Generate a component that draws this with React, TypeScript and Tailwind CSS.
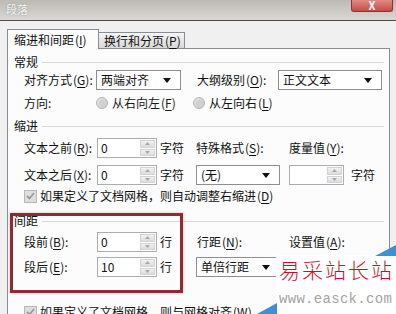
import type { JSX, ReactNode } from "react";

function Acc({ text, k, colon = true }: { text: string; k: string; colon?: boolean }): JSX.Element {
  return (
    <span className="whitespace-nowrap">
      {text}
      <span className="ml-[1px]">(</span>
      <span className="underline underline-offset-2">{k}</span>)
      {colon ? ":" : ""}
    </span>
  );
}

function Heading({ title }: { title: string }): JSX.Element {
  return (
    <div className="flex items-center h-[16px] pl-[6px] pr-[5px]">
      <span>{title}</span>
      <div className="ml-[4px] flex-1 h-px bg-[#d8d8d8]" />
    </div>
  );
}

function Arrow(): JSX.Element {
  return (
    <svg width="8" height="5" viewBox="0 0 8 5" className="shrink-0">
      <path d="M0 0h8L4 5z" fill="#111" />
    </svg>
  );
}

function Select({ value, className }: { value: string; className: string }): JSX.Element {
  return (
    <div className={`flex items-center h-[20px] border border-[#8e8f8f] bg-white pl-[4px] pr-[9px] ${className}`}>
      <span className="flex-1">{value}</span>
      <Arrow />
    </div>
  );
}

function Spin({ value, className }: { value: string; className: string }): JSX.Element {
  return (
    <div className={`flex h-[20px] border border-[#abadb3] bg-white ${className}`}>
      <div className="flex-1 pl-[3px] leading-[18px]">{value}</div>
      <div className="w-[17px] flex flex-col gap-px p-px bg-white">
        <div className="flex-1 flex items-center justify-center bg-gradient-to-b from-[#f2f2f2] to-[#dcdcdc] border border-[#d3d3d3]">
          <svg width="5" height="3" viewBox="0 0 5 3">
            <path d="M0 3h5L2.5 0z" fill="#a8a8a8" />
          </svg>
        </div>
        <div className="flex-1 flex items-center justify-center bg-gradient-to-b from-[#f2f2f2] to-[#dcdcdc] border border-[#d3d3d3]">
          <svg width="5" height="3" viewBox="0 0 5 3">
            <path d="M0 0h5L2.5 3z" fill="#a8a8a8" />
          </svg>
        </div>
      </div>
    </div>
  );
}

function Radio(): JSX.Element {
  return (
    <div className="w-[12px] h-[12px] rounded-full border border-[#b4b4b4] bg-gradient-to-br from-[#e6e6e6] to-[#c8c8c8] flex items-center justify-center">
      <div className="w-[6px] h-[6px] rounded-full bg-[#d0d0d0]" />
    </div>
  );
}

function Check(): JSX.Element {
  return (
    <div className="w-[13px] h-[13px] border border-[#b8b8b8] bg-[#dedede] flex items-center justify-center shrink-0">
      <svg width="9" height="8" viewBox="0 0 9 8">
        <path d="M1 4l2.5 2.5L8 1" stroke="#9a9a9a" strokeWidth="1.8" fill="none" />
      </svg>
    </div>
  );
}

function Row({ children, className = "" }: { children: ReactNode; className?: string }): JSX.Element {
  return <div className={`flex items-center pl-[16px] ${className}`}>{children}</div>;
}

export default function App(): JSX.Element {
  return (
    <div className="relative w-[396px] h-[314px] overflow-hidden bg-[#f0f0f0] text-[12px] leading-none text-[#111] font-['Noto_Sans_CJK_SC','Noto_Sans',sans-serif]">
      {/* Title bar */}
      <div className="relative h-[21px] bg-gradient-to-b from-[#bdbab4] to-[#dad8d4] border-b border-[#4c4c4c]">
        <span className="absolute left-[6px] top-[4px] text-[11px] text-[#f6f6f6] [text-shadow:0_0_2px_#8a8a8a]">段落</span>
        <div className="absolute left-[351px] top-0 w-[42px] h-[12px] rounded-b-[3px] border border-t-0 border-[#8a3434] bg-gradient-to-b from-[#e08b84] to-[#c54a45] flex items-end justify-center overflow-hidden">
          <span className="text-[11px] font-bold text-white leading-[11px]">X</span>
        </div>
      </div>

      {/* Tabs */}
      <div className="flex items-end pl-[7px] mt-[8px] h-[19px]">
        <div className="relative z-10 w-[92px] h-[20px] -mb-px bg-[#fcfcfc] border border-b-0 border-[#898c95] pl-[6px] flex items-center">
          <Acc text="缩进和间距" k="I" colon={false} />
        </div>
        <div className="w-[86px] h-[16px] bg-gradient-to-b from-[#f4f4f4] to-[#d9d9d9] border border-l-0 border-b-0 border-[#898c95] pl-[5px] flex items-center">
          <Acc text="换行和分页" k="P" colon={false} />
        </div>
      </div>

      {/* Panel */}
      <div className="ml-[7px] w-[383px] h-[300px] border border-[#898c95] bg-[#fcfcfc] pt-[5px]">
        <Heading title="常规" />
        <Row className="h-[20px]">
          <div className="w-[72px]">
            <Acc text="对齐方式" k="G" />
          </div>
          <Select value="两端对齐" className="w-[85px]" />
          <div className="w-[16px]" />
          <div className="w-[81px]">
            <Acc text="大纲级别" k="O" />
          </div>
          <Select value="正文文本" className="w-[104px]" />
        </Row>
        <Row className="h-[16px] mt-[5px]">
          <div className="w-[72px]">方向:</div>
          <div className="w-[97px] flex items-center">
            <Radio />
            <span className="ml-[4px] text-[#1a1a1a]">
              <Acc text="从右向左" k="F" colon={false} />
            </span>
          </div>
          <Radio />
          <span className="ml-[4px]">
            <Acc text="从左向右" k="L" colon={false} />
          </span>
        </Row>

        <div className="mt-[7px]">
          <Heading title="缩进" />
        </div>
        <Row className="h-[20px] mt-[4px]">
          <div className="w-[73px]">
            <Acc text="文本之前" k="R" />
          </div>
          <Spin value="0" className="w-[60px]" />
          <span className="ml-[3px] w-[36px]">字符</span>
          <div className="w-[93px]">
            <Acc text="特殊格式" k="S" />
          </div>
          <Acc text="度量值" k="Y" />
        </Row>
        <Row className="h-[20px] mt-[7px]">
          <div className="w-[73px]">
            <Acc text="文本之后" k="X" />
          </div>
          <Spin value="0" className="w-[60px]" />
          <span className="ml-[3px] w-[36px]">字符</span>
          <Select value="(无)" className="w-[84px]" />
          <div className="w-[9px]" />
          <Spin value="" className="w-[55px]" />
          <span className="ml-[7px]">字符</span>
        </Row>
        <Row className="h-[14px] mt-[4px]">
          <Check />
          <span className="ml-[3px]">
            如果定义了文档网格，则自动调整右缩进
            <Acc text="" k="D" colon={false} />
          </span>
        </Row>

        <div className="mt-[10px]">
          <Heading title="间距" />
        </div>
        <Row className="h-[20px] mt-[3px]">
          <div className="w-[73px]">
            <Acc text="段前" k="B" />
          </div>
          <Spin value="0" className="w-[60px]" />
          <span className="ml-[3px] w-[36px]">行</span>
          <div className="w-[93px] pl-[1px]">
            <Acc text="行距" k="N" />
          </div>
          <Acc text="设置值" k="A" />
        </Row>
        <Row className="h-[20px] mt-[5px]">
          <div className="w-[73px]">
            <Acc text="段后" k="E" />
          </div>
          <Spin value="10" className="w-[60px]" />
          <span className="ml-[3px] w-[36px]">行</span>
          <Select value="单倍行距" className="w-[84px]" />
        </Row>
        <Row className="h-[14px] mt-[28px]">
          <Check />
          <span className="ml-[3px]">
            如果定义了文档网格，则与网格对齐
            <Acc text="" k="W" colon={false} />
          </span>
        </Row>
      </div>

      {/* Red highlight box */}
      <div className="absolute left-[10px] top-[213px] w-[173px] h-[80px] border-[3px] border-[#8c2a36] shadow-[0_0_3px_#e8b4b8]" />

      {/* Watermark */}
      <div className="absolute left-[276px] top-[255px] right-0 bottom-0 bg-white" />
      <svg className="absolute left-0 top-0" width="396" height="314" viewBox="0 0 396 314">
        <path d="M396 245V256H375z" fill="#3d8fd8" />
        <path d="M277 303V314H257z" fill="#3d8fd8" />
      </svg>
      <div className="absolute left-[279px] top-[259px] whitespace-nowrap text-[21px] leading-none tracking-[2px] font-light text-[#c8102e]">
        易采站长站
      </div>
      <div className="absolute left-[279px] top-[292px] whitespace-nowrap text-[14px] leading-none tracking-[0.3px] text-[#a4a4a4] font-['Liberation_Mono',monospace]">
        www.easck.com
      </div>
    </div>
  );
}
